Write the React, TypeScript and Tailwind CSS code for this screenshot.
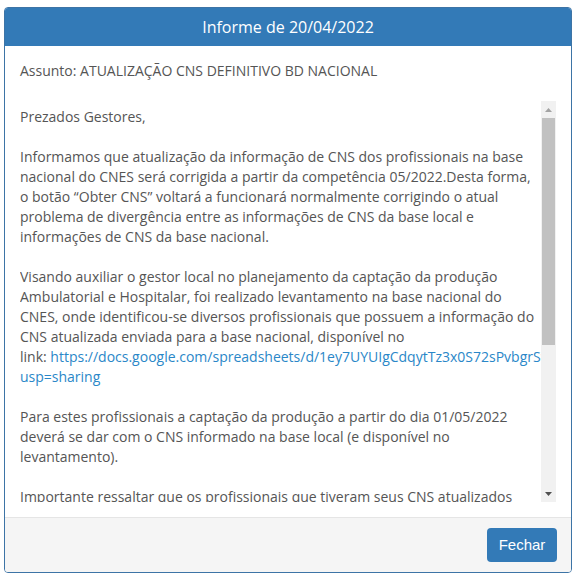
import React from "react";

const body = "font-['Open_Sans',sans-serif]";

function ScrollBar() {
  return (
    <div className="flex w-[15px] shrink-0 flex-col bg-[#f1f1f1]">
      <div className="flex h-[17px] items-center justify-center">
        <svg width="7" height="4" viewBox="0 0 7 4">
          <path d="M0 4 L3.5 0 L7 4 Z" fill="#a3a3a3" />
        </svg>
      </div>
      <div className="mx-[1px] h-[227px] bg-[#c1c1c1]" />
      <div className="flex-1" />
      <div className="flex h-[17px] items-center justify-center">
        <svg width="7" height="4" viewBox="0 0 7 4">
          <path d="M0 0 L7 0 L3.5 4 Z" fill="#505050" />
        </svg>
      </div>
    </div>
  );
}

export default function App() {
  return (
    <div className="h-[576px] w-[576px] bg-white pl-[4px] pt-[7px]">
      <div className="flex h-[566px] w-[568px] flex-col overflow-hidden rounded-[4px] border border-[#3d74a6] bg-white">
        <div className="flex h-[38px] shrink-0 items-center justify-center bg-[#337ab7]">
          <h1 className={`${body} text-[16px] text-white`}>Informe de 20/04/2022</h1>
        </div>
        <div className={`${body} flex min-h-0 flex-1 flex-col px-[15px] pt-[15px] pb-[15px] text-[14px] leading-[20px] text-[#555]`}>
          <p className="mb-[20px]">Assunto: ATUALIZAÇÃO CNS DEFINITIVO BD NACIONAL</p>
          <div className="flex min-h-0 flex-1">
            <div className="min-w-0 flex-1 overflow-hidden pt-[6px]">
              <p className="mb-[20px]">Prezados Gestores,</p>
              <p className="mb-[20px]">
                Informamos que atualização da informação de CNS dos profissionais na base nacional do CNES será corrigida a partir da competência 05/2022.Desta forma, o botão “Obter CNS” voltará a funcionará normalmente corrigindo o atual problema de divergência entre as informações de CNS da base local e informações de CNS da base nacional.
              </p>
              <p>
                Visando auxiliar o gestor local no planejamento da captação da produção Ambulatorial e Hospitalar, foi realizado levantamento na base nacional do CNES, onde identificou-se diversos profissionais que possuem a informação do CNS atualizada enviada para a base nacional, disponível no
              </p>
              <p className="mb-[20px] whitespace-nowrap">
                link: <a className="text-[#2a87c8]">https://docs.google.com/spreadsheets/d/1ey7UYUIgCdqytTz3x0S72sPvbgrSwq/edit?</a>
                <br />
                <a className="text-[#2a87c8]">usp=sharing</a>
              </p>
              <p className="mb-[20px]">
                Para estes profissionais a captação da produção a partir do dia 01/05/2022 deverá se dar com o CNS informado na base local (e disponível no levantamento).
              </p>
              <p>
                Importante ressaltar que os profissionais que tiveram seus CNS atualizados
                <br />
                na base nacional continuarão com a produção válida nas competências anteriores.
              </p>
            </div>
            <ScrollBar />
          </div>
        </div>
        <div className="flex h-[55px] shrink-0 items-start justify-end border-t border-[#e5e5e5] bg-[#f5f5f5] pr-[14px] pt-[10px]">
          <button className="h-[34px] w-[70px] rounded-[4px] bg-[#337ab7] font-['Liberation_Sans',Arial,sans-serif] text-[15px] text-white">
            Fechar
          </button>
        </div>
      </div>
    </div>
  );
}
